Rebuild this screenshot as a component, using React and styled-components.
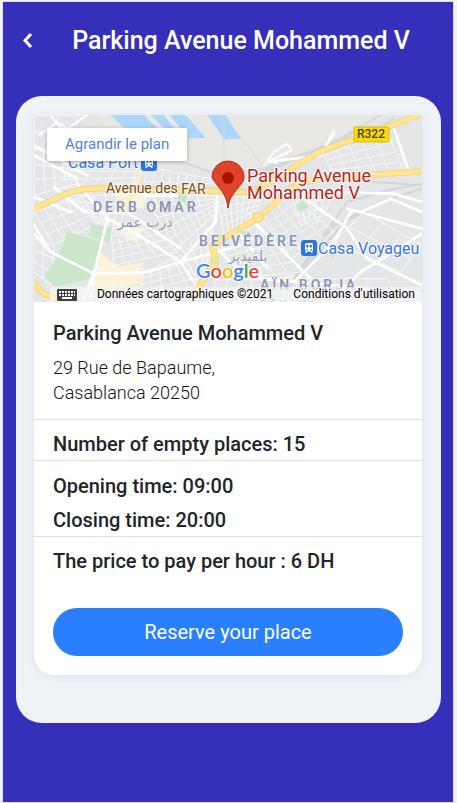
import React from "react";
import styled, { createGlobalStyle } from "styled-components";

const GlobalStyle = createGlobalStyle`
  * { box-sizing: border-box; }
  html, body, #root { min-height: 100vh; }
  body {
    margin: 0;
    background: #f4f4f6;
    font-family: Roboto, "Liberation Sans", sans-serif;
    color: #212529;
  }
  h1, h2, p { margin: 0; }
`;

const Frame = styled.div`
  min-height: 100vh;
  padding: 1px 3px 0 2px;
`;

const Screen = styled.main`
  min-height: calc(100vh - 1px);
  border: 1px solid #dcdcec;
  background: #362fb9;
`;

const Header = styled.header`
  display: grid;
  grid-template-columns: 50px 1fr 24px;
  align-items: center;
  height: 77px;
`;

const BackButton = styled.button`
  display: flex;
  align-items: center;
  justify-content: center;
  width: 48px;
  height: 48px;
  padding: 0;
  border: 0;
  background: none;
  color: #fff;
  cursor: pointer;
`;

const Title = styled.h1`
  color: #fff;
  font-size: 25px;
  font-weight: 500;
  line-height: 32px;
  text-align: center;
`;

const Panel = styled.section`
  margin: 17px 12px 0 13px;
  padding: 19px 19px 48px 18px;
  border-radius: 26px;
  background: #eff3f8;
`;

const Card = styled.article`
  overflow: hidden;
  border-radius: 0 0 20px 20px;
  background: #fff;
  box-shadow: 0 2px 8px rgba(40, 50, 90, 0.08);
`;

const MapBox = styled.div`
  position: relative;
  height: 187px;
  overflow: hidden;
  background: #e8e8e8;
`;

const MapDrawing = styled.svg`
  display: block;
  width: 100%;
  height: 100%;
`;

const EnlargeLink = styled.a`
  position: absolute;
  top: 13px;
  left: 13px;
  padding: 0 18px;
  border-radius: 2px;
  background: #fff;
  box-shadow: 0 1px 4px rgba(0, 0, 0, 0.3);
  color: #5282e0;
  font-size: 15px;
  line-height: 33px;
  text-decoration: none;
`;

const Attribution = styled.div`
  position: absolute;
  right: 0;
  bottom: 0;
  display: flex;
  align-items: center;
  gap: 20px;
  height: 15px;
  padding: 0 7px;
  background: rgba(245, 245, 245, 0.7);
  color: #000;
  font-size: 12px;
  line-height: 15px;
  white-space: nowrap;
`;

const ShortcutsButton = styled.button`
  display: flex;
  width: 20px;
  height: 12px;
  padding: 0;
  border: 0;
  background: none;
`;

const TermsLink = styled.a`
  color: inherit;
  text-decoration: none;
`;

const Block = styled.div`
  display: flex;
  flex-direction: column;
  gap: ${(p) => p.$gap || 0}px;
  padding: ${(p) => p.$pad};
  border-bottom: 1px solid ${(p) => (p.$last ? "transparent" : "#dfe0e2")};
`;

const Heading = styled.h2`
  font-size: 20px;
  font-weight: 500;
  line-height: 24px;
`;

const Address = styled.p`
  color: #111417;
  font-size: 18px;
  font-weight: 300;
  line-height: 25px;
`;

const ReserveButton = styled.button`
  display: block;
  width: calc(100% - 38px);
  height: 48px;
  margin: 0 19px 19px;
  border: 0;
  border-radius: 24px;
  background: #297fff;
  color: #fff;
  font-family: inherit;
  font-size: 20px;
  cursor: pointer;
`;

/* Streets of a quarter: a quadrilateral a-b-c-d crossed by two sets of lines. */
function Streets({ corners: [a, b, c, d], cols, rows, stroke = "#f8f8f8", width = 3 }) {
  const mix = (p, q, t) => [p[0] + (q[0] - p[0]) * t, p[1] + (q[1] - p[1]) * t];
  const seg = (p, q) => `M${Math.round(p[0])} ${Math.round(p[1])}L${Math.round(q[0])} ${Math.round(q[1])}`;
  let path = "";
  for (let i = 0; i <= cols; i++) path += seg(mix(a, b, i / cols), mix(d, c, i / cols));
  for (let i = 0; i <= rows; i++) path += seg(mix(a, d, i / rows), mix(b, c, i / rows));
  return <path d={path} stroke={stroke} strokeWidth={width} fill="none" />;
}

const quarters = [
  { corners: [[0, 10], [150, 10], [40, 110], [0, 110]], cols: 2, rows: 2 },
  { corners: [[0, 110], [110, 150], [130, 215], [0, 250]], cols: 4, rows: 3 },
  { corners: [[130, 150], [310, 160], [300, 215], [60, 230]], cols: 6, rows: 3 },
  { corners: [[340, 165], [530, 200], [530, 215], [330, 210]], cols: 8, rows: 1 },
  { corners: [[0, 300], [160, 250], [220, 320], [60, 400]], cols: 5, rows: 3 },
  { corners: [[100, 250], [330, 250], [260, 370], [190, 330]], cols: 6, rows: 4 },
  { corners: [[330, 255], [540, 250], [545, 300], [430, 410]], cols: 8, rows: 5 },
  { corners: [[230, 350], [330, 330], [430, 420], [240, 460]], cols: 6, rows: 5 },
  { corners: [[180, 470], [330, 470], [280, 570], [150, 550]], cols: 7, rows: 5 },
  { corners: [[330, 480], [440, 430], [500, 520], [310, 560]], cols: 5, rows: 4 },
  { corners: [[440, 400], [540, 310], [530, 430], [490, 510]], cols: 4, rows: 5 },
  { corners: [[550, 255], [690, 250], [660, 310], [570, 370]], cols: 7, rows: 4 },
  { corners: [[560, 390], [690, 330], [800, 480], [600, 500]], cols: 5, rows: 5 },
  { corners: [[690, 310], [770, 250], [900, 360], [770, 440]], cols: 4, rows: 6 },
  { corners: [[770, 250], [900, 230], [870, 310], [800, 340]], cols: 5, rows: 3 },
  { corners: [[870, 130], [1060, 60], [1110, 180], [900, 190]], cols: 5, rows: 4 },
  { corners: [[900, 390], [990, 300], [1164, 400], [1100, 480]], cols: 2, rows: 3 },
  { corners: [[800, 500], [1060, 500], [1100, 570], [760, 570]], cols: 4, rows: 2 },
  { corners: [[0, 380], [60, 400], [50, 520], [0, 480]], cols: 2, rows: 3 },
  { corners: [[560, 470], [680, 470], [700, 570], [520, 570]], cols: 4, rows: 3 },
];

const mainStreets =
  "M0 340L50 420L180 485L170 570M50 420L0 365M130 215L220 320L180 485L150 560" +
  "M220 320L330 380L440 450L620 400M180 485L340 480L440 450L500 540M440 450L545 330L550 250" +
  "M60 225L150 300L280 300L440 410M0 130L130 200M0 100L160 190M300 215L330 250L430 250" +
  "M0 255L110 300M540 400L600 460L680 500L1164 545M660 330L770 440L830 500M800 250L940 350L1000 440L1164 520" +
  "M700 150L860 130L900 60M880 240L1080 245L1164 270M1080 50L1125 180M980 300L1070 260L1164 300" +
  "M950 300L900 390L780 510M940 290L1164 350M1164 365L980 480L900 560M620 370L700 470";

const amber = "M0 290C100 245 110 228 220 228L640 240C740 210 780 150 880 110L1060 45L1164 5";
const amberEast = "M545 455L535 400L600 360L680 312L760 240C790 205 850 200 980 190L1164 178";
const amberSouth = "M540 400L542 455L500 515L465 575M-10 505L30 545L70 560";

function TrainBadge({ x, y }) {
  return (
    <g transform={`translate(${x} ${y})`}>
      <rect width="16" height="16" rx="3" fill="#2f73e0" />
      <path
        fill="#fff"
        fillRule="evenodd"
        d="M5.5 3h5A1.5 1.5 0 0 1 12 4.500V10a1.500 1.500 0 0 1-1.200 1.450L12 13h-1.600l-1-1.400H6.600L5.600 13H4l1.200-1.550A1.500 1.500 0 0 1 4 10V4.500A1.500 1.500 0 0 1 5.500 3ZM5.200 5v2.600h2.200V5ZM8.600 5v2.600h2.200V5ZM5.200 9v1.400h1.400V9ZM9.400 9v1.400h1.400V9Z"
      />
    </g>
  );
}

const District = styled.text`
  fill: #8795b0;
  stroke: #f3f4f6;
  stroke-width: 1px;
  paint-order: stroke;
  font-size: 14px;
  font-weight: 600;
  letter-spacing: 3px;
`;

const ArabicLabel = styled.text`
  fill: #929cb0;
  stroke: #f1f2f4;
  stroke-width: 1px;
  paint-order: stroke;
  font-family: "DejaVu Sans", sans-serif;
  font-size: 14px;
`;

const Label = styled.text`
  fill: ${(p) => p.$color};
  stroke: #f8f8f8;
  stroke-width: 2px;
  paint-order: stroke;
  font-size: ${(p) => p.$size}px;
  font-weight: 400;
`;

const Logo = styled.text`
  stroke: #fff;
  stroke-width: 2px;
  paint-order: stroke;
  font-family: Lato, sans-serif;
  font-size: 20px;
  font-weight: 600;
`;

const logoLetters = [
  ["G", "#4285f4"],
  ["o", "#ea4335"],
  ["o", "#fbbc05"],
  ["g", "#4285f4"],
  ["l", "#34a853"],
  ["e", "#ea4335"],
];

function CityMap() {
  return (
    <MapDrawing viewBox="0 0 388 187" preserveAspectRatio="xMidYMid slice" role="img" aria-label="Map of Casablanca">
      <g transform="translate(0 -3) scale(0.33333)" fill="none" strokeLinecap="round" strokeLinejoin="round">
        <rect y="9" width="1164" height="561" fill="#e5e6e7" />
        <path d="M190 9H1060L950 60L860 90L700 165L540 175L460 150L250 100Z" fill="#e9e8e4" />
        <path d="M230 9H455L515 78H462V48H270ZM520 9H575L622 82H570Z" fill="#acd7fb" />
        <path d="M340 9L380 48M398 9L440 60" stroke="#e9e8e4" strokeWidth="14" />
        <path d="M190 415L255 465L330 450L300 520L180 525ZM240 210L340 225L330 290L250 290ZM280 340L330 350L310 390L270 380ZM700 500L800 485L790 500L740 520Z" fill="#fbf2d8" />
        <path d="M460 155L540 185L640 190L900 90L1040 9M540 175L700 180L950 70M950 100L1080 20M660 190L880 100L980 50" stroke="#d5d8db" strokeWidth="6" />
        <path d="M1164 215L1060 235L940 270L800 470M1164 230L1040 270L940 320L760 530M1000 300L900 340L780 500M880 200L1164 220" stroke="#d3d6d9" strokeWidth="6" />
        <path d="M570 9V190M610 60L670 140L700 180" stroke="#d5d6d7" strokeWidth="3" />
        {quarters.map((quarter, i) => (
          <Streets key={i} {...quarter} />
        ))}
        <Streets corners={[[185, 490], [290, 455], [330, 520], [200, 550]]} cols={6} rows={6} stroke="#fcf1cf" width={4} />
        <path d="M100 360L205 390L165 500L65 525L30 490L75 430ZM170 335L235 345L225 395L165 370Z" fill="#cbe6c8" />
        <path d="M435 245l25 5l-5 25l-25-15zM785 280l20-15l20 20l-25 15zM620 360l20-5l5 20l-25 5zM885 420l35-30l10 10l-35 40z" fill="#c5e6c9" />
        <path d={mainStreets} stroke="#fff" strokeWidth="8" />
        <path d="M690 160L720 120L760 95L772 115L710 145L730 155M15 70L70 30L100 50L160 9M50 9L90 60" stroke="#fff" strokeWidth="6" />
        <path d="M320 175L310 215L270 300" stroke="#fcefc4" strokeWidth="12" />
        {[amber, amberEast, amberSouth].map((d) => (
          <path key={d} d={d} stroke="#f3d27c" strokeWidth="19" />
        ))}
        {[amber, amberEast, amberSouth].map((d) => (
          <path key={d} d={d} stroke="#fde594" strokeWidth="14" />
        ))}
        <circle cx="673" cy="316" r="15" fill="#fde594" stroke="#f3d27c" strokeWidth="4" />
      </g>

      <Label x="34" y="53" $color="#3c79dc" $size="16">Casa Port</Label>
      <TrainBadge x="107" y="40" />
      <Label x="72" y="78" $color="#7b4c0c" $size="14">
        Avenue des <tspan dy="1">FAR</tspan>
      </Label>
      <District x="59" y="97">DERB OMAR</District>
      <ArabicLabel x="111" y="112" textAnchor="middle">درب عمر</ArabicLabel>
      <District x="165" y="131">BELVÉDÈRE</District>
      <ArabicLabel x="214" y="146" textAnchor="middle">بلڤيدير</ArabicLabel>
      <TrainBadge x="267" y="125" />
      <Label x="284" y="139" $color="#3c79dc" $size="16">Casa Voyageu</Label>
      <District x="226" y="175">AÏN BORJA</District>
      <ArabicLabel x="253" y="189" textAnchor="middle">عين برجة</ArabicLabel>

      <rect x="320" y="12" width="35" height="15" rx="1" fill="#fbd911" stroke="#dcb90d" />
      <text x="337" y="23" textAnchor="middle" fill="#4d4412" fontSize="12" fontWeight="500">R322</text>

      <path
        d="M194 93C193 83 189 77 184 71C180 66 178 63 178 62A16 16 0 1 1 210 62C210 67 207 69 204 73C199 79 195 84 194 93Z"
        fill="#df432c"
        stroke="#b62a1c"
      />
      <circle cx="194" cy="63" r="6" fill="#a91400" />
      <Label x="213" y="67" $color="#b3261e" $size="18">Parking Avenue</Label>
      <Label x="213" y="84" $color="#b3261e" $size="18">Mohammed V</Label>

      <Logo x="162" y="163">
        {logoLetters.map(([letter, color], i) => (
          <tspan key={i} fill={color}>{letter}</tspan>
        ))}
      </Logo>
    </MapDrawing>
  );
}

function KeyboardIcon() {
  return (
    <svg width="20" height="12" viewBox="0 0 20 12" aria-hidden="true">
      <rect width="20" height="12" rx="1" fill="#3c4043" />
      <path d="M2 3h16M2 6h16" stroke="#fff" strokeWidth="2" strokeDasharray="2 1" />
      <path d="M5 9h10" stroke="#fff" strokeWidth="2" />
    </svg>
  );
}

export default function App() {
  return (
    <Frame>
      <GlobalStyle />
      <Screen>
        <Header>
          <BackButton type="button" aria-label="Back">
            <svg width="12" height="18" viewBox="0 0 12 18" fill="none" aria-hidden="true">
              <path d="M10 2L4 8.500l6 6.500" stroke="currentColor" strokeWidth="3" />
            </svg>
          </BackButton>
          <Title>Parking Avenue Mohammed V</Title>
        </Header>
        <Panel>
          <Card>
            <MapBox>
              <CityMap />
              <EnlargeLink href="#map">Agrandir le plan</EnlargeLink>
              <Attribution>
                <ShortcutsButton type="button" aria-label="Raccourcis clavier">
                  <KeyboardIcon />
                </ShortcutsButton>
                <span>Données cartographiques ©2021</span>
                <TermsLink href="#terms">Conditions d'utilisation</TermsLink>
              </Attribution>
            </MapBox>
            <Block $pad="19px 19px 14px" $gap={10}>
              <Heading>Parking Avenue Mohammed V</Heading>
              <Address>
                29 Rue de Bapaume,
                <br />
                Casablanca 20250
              </Address>
            </Block>
            <Block $pad="12px 19px 4px">
              <Heading>Number of empty places: 15</Heading>
            </Block>
            <Block $pad="13px 19px 4px" $gap={10}>
              <Heading>Opening time: 09:00</Heading>
              <Heading>Closing time: 20:00</Heading>
            </Block>
            <Block $pad="12px 19px 34px" $last>
              <Heading>The price to pay per hour : 6 DH</Heading>
            </Block>
            <ReserveButton type="button">Reserve your place</ReserveButton>
          </Card>
        </Panel>
      </Screen>
    </Frame>
  );
}
